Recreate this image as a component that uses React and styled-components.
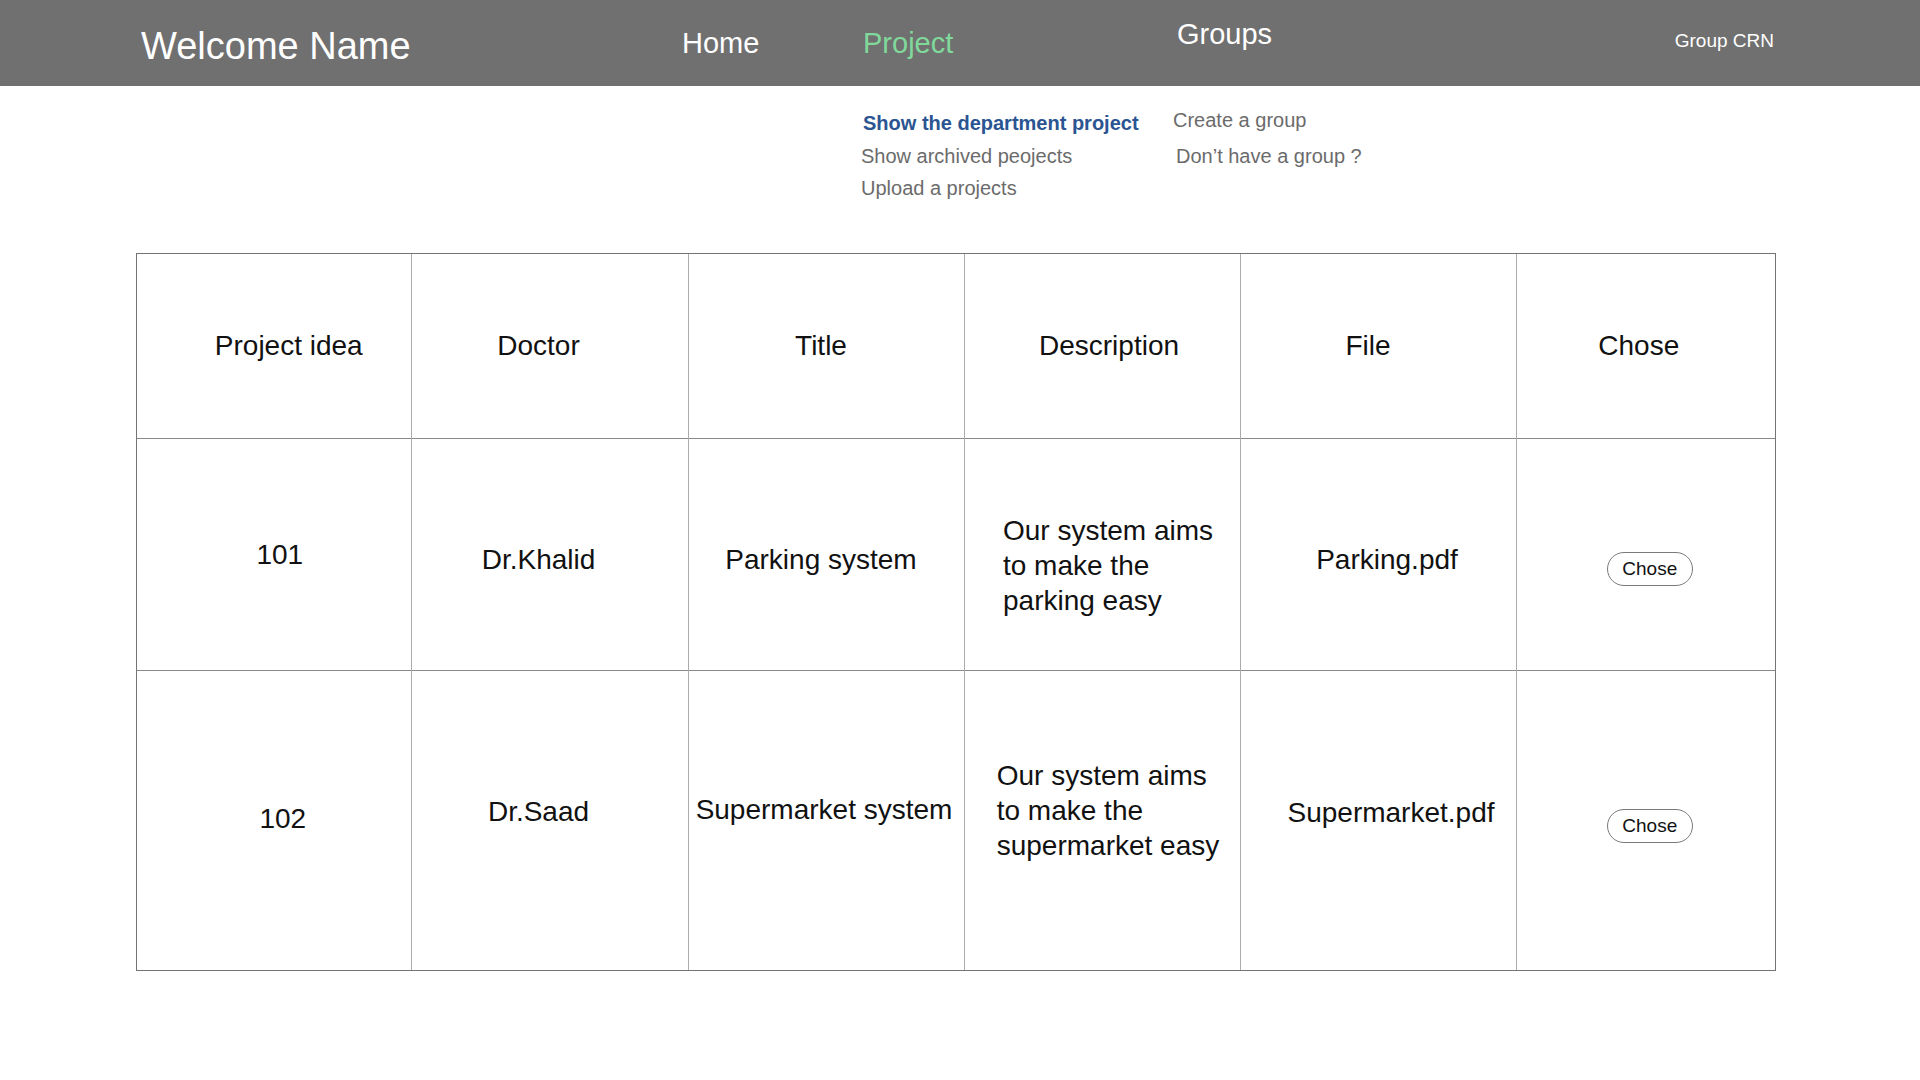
import React from 'react'
import styled, { createGlobalStyle } from 'styled-components'

const GlobalStyle = createGlobalStyle`
  body {
    margin: 0;
    background: #ffffff;
    font-family: "Liberation Sans", Arial, sans-serif;
  }
`

// small [dx, dy] nudges per cell, the mock-up isn't perfectly centred
const columns = [
  { label: 'Project idea', width: 274, nudge: [15, 0] },
  { label: 'Doctor', width: 277, nudge: [-11, 0] },
  { label: 'Title', width: 276, nudge: [-5, 0] },
  { label: 'Description', width: 276, nudge: [7, 0] },
  { label: 'File', width: 276, nudge: [-10, 0] },
  { label: 'Chose', width: 259, nudge: [-7, 0] },
]

const projects = [
  {
    id: '101',
    doctor: 'Dr.Khalid',
    title: 'Parking system',
    description: ['Our system aims', 'to make the', 'parking easy'],
    file: 'Parking.pdf',
    height: 232,
    nudge: [[6, 0], [-11, 5], [-5, 5], [0, 11], [9, 5], [0, 5]],
  },
  {
    id: '102',
    doctor: 'Dr.Saad',
    title: 'Supermarket system',
    description: ['Our system aims', 'to make the', 'supermarket easy'],
    file: 'Supermarket.pdf',
    height: 300,
    nudge: [[9, -2], [-11, -9], [-2, -11], [0, -10], [13, -8], [0, -4]],
  },
]

export default function App() {
  return <div>
    <GlobalStyle />
    <Header>
      <Brand>Welcome Name</Brand>
      <NavLink href="#" $top={29}>Home</NavLink>
      <NavLink href="#" $top={29} $active>Project</NavLink>
      <NavLink href="#" $top={20}>Groups</NavLink>
      <NavLink href="#" $top={31} $size={19}>Group CRN</NavLink>
    </Header>

    <SubNav>
      <SubColumn $width={312} $top={27}>
        <SubLink href="#" $active $indent={2}>Show the department project</SubLink>
        <SubLink href="#" $gap={13}>Show archived peojects</SubLink>
        <SubLink href="#" $gap={12}>Upload a projects</SubLink>
      </SubColumn>
      <SubColumn $top={24}>
        <SubLink href="#">Create a group</SubLink>
        <SubLink href="#" $gap={16} $indent={3}>Don’t have a group ?</SubLink>
      </SubColumn>
    </SubNav>

    <TableFrame>
      <Table>
        <colgroup>
          {columns.map(c => <col key={c.label} style={{ width: c.width }} />)}
        </colgroup>
        <thead>
          <HeadRow>
            {columns.map(c => <HeadCell key={c.label} $dx={c.nudge[0]} $dy={c.nudge[1]}>{c.label}</HeadCell>)}
          </HeadRow>
        </thead>
        <tbody>
          {projects.map(p => (
            <Row key={p.id} style={{ height: p.height }}>
              <Cell $dx={p.nudge[0][0]} $dy={p.nudge[0][1]}>{p.id}</Cell>
              <Cell $dx={p.nudge[1][0]} $dy={p.nudge[1][1]}>{p.doctor}</Cell>
              <Cell $nowrap $dx={p.nudge[2][0]} $dy={p.nudge[2][1]}>{p.title}</Cell>
              <Cell $dx={p.nudge[3][0]} $dy={p.nudge[3][1]}>
                <DescBlock>
                  {p.description.map(line => <div key={line}>{line}</div>)}
                </DescBlock>
              </Cell>
              <Cell $nowrap $dx={p.nudge[4][0]} $dy={p.nudge[4][1]}>{p.file}</Cell>
              <Cell $dx={4} $dy={p.nudge[5][1]}>
                <ChoseButton>Chose</ChoseButton>
              </Cell>
            </Row>
          ))}
        </tbody>
      </Table>
    </TableFrame>
  </div>
}

const Header = styled.header`
  height: 86px;
  background: #707070;
  display: grid;
  grid-template-columns: 541px 181px 314px 1fr auto;
  align-items: start;
  padding: 0 146px 0 141px;
  color: #ffffff;
`

const Brand = styled.div`
  font-size: 38px;
  line-height: 1;
  padding-top: 27px;
  white-space: nowrap;
`

const NavLink = styled.a`
  font-size: ${p => p.$size || 29}px;
  line-height: 1;
  padding-top: ${p => p.$top}px;
  color: ${p => p.$active ? '#80d99b' : '#ffffff'};
  text-decoration: none;
  white-space: nowrap;
`

const SubNav = styled.nav`
  height: 167px;
  box-sizing: border-box;
  display: flex;
  padding-left: 861px;
`

const SubColumn = styled.div`
  display: flex;
  flex-direction: column;
  align-items: flex-start;
  width: ${p => p.$width ? p.$width + 'px' : 'auto'};
  padding-top: ${p => p.$top}px;
`

const SubLink = styled.a`
  font-size: 20px;
  line-height: 1;
  margin-top: ${p => p.$gap || 0}px;
  padding-left: ${p => p.$indent || 0}px;
  color: ${p => p.$active ? '#2b5592' : '#6b6b6b'};
  font-weight: ${p => p.$active ? 700 : 400};
  text-decoration: none;
  white-space: nowrap;
`

const TableFrame = styled.div`
  margin-left: 136px;
  width: 1640px;
  box-sizing: border-box;
  border: 1px solid #747474;
`

const Table = styled.table`
  width: 100%;
  border-collapse: collapse;
  table-layout: fixed;
  color: #111111;
`

const HeadRow = styled.tr`
  height: 184px;

  & > *:not(:last-child) {
    border-right: 1px solid #ababab;
  }
`

const Row = styled.tr`
  & > * {
    border-top: 1px solid #8a8a8a;
  }

  & > *:not(:last-child) {
    border-right: 1px solid #ababab;
  }
`

const nudge = p => `
  padding-left: ${Math.max(0, p.$dx || 0) * 2}px;
  padding-right: ${Math.max(0, -(p.$dx || 0)) * 2}px;
  padding-top: ${Math.max(0, p.$dy || 0) * 2}px;
  padding-bottom: ${Math.max(0, -(p.$dy || 0)) * 2}px;
`

const HeadCell = styled.th`
  ${nudge}
  font-size: 28px;
  font-weight: 400;
  text-align: center;
  vertical-align: middle;
`

const Cell = styled.td`
  ${nudge}
  font-size: 28px;
  line-height: 35px;
  text-align: center;
  vertical-align: middle;
  white-space: ${p => p.$nowrap ? 'nowrap' : 'normal'};
`

const DescBlock = styled.div`
  display: inline-block;
  text-align: left;
  padding-left: 12px;
  white-space: nowrap;
`

const ChoseButton = styled.button`
  display: block;
  margin: 20px auto 0;
  width: 86px;
  height: 34px;
  background: #ffffff;
  border: 1px solid #7a7a7a;
  border-radius: 17px;
  font-family: "Liberation Sans", Arial, sans-serif;
  font-size: 19px;
  color: #111111;
  cursor: pointer;
`
